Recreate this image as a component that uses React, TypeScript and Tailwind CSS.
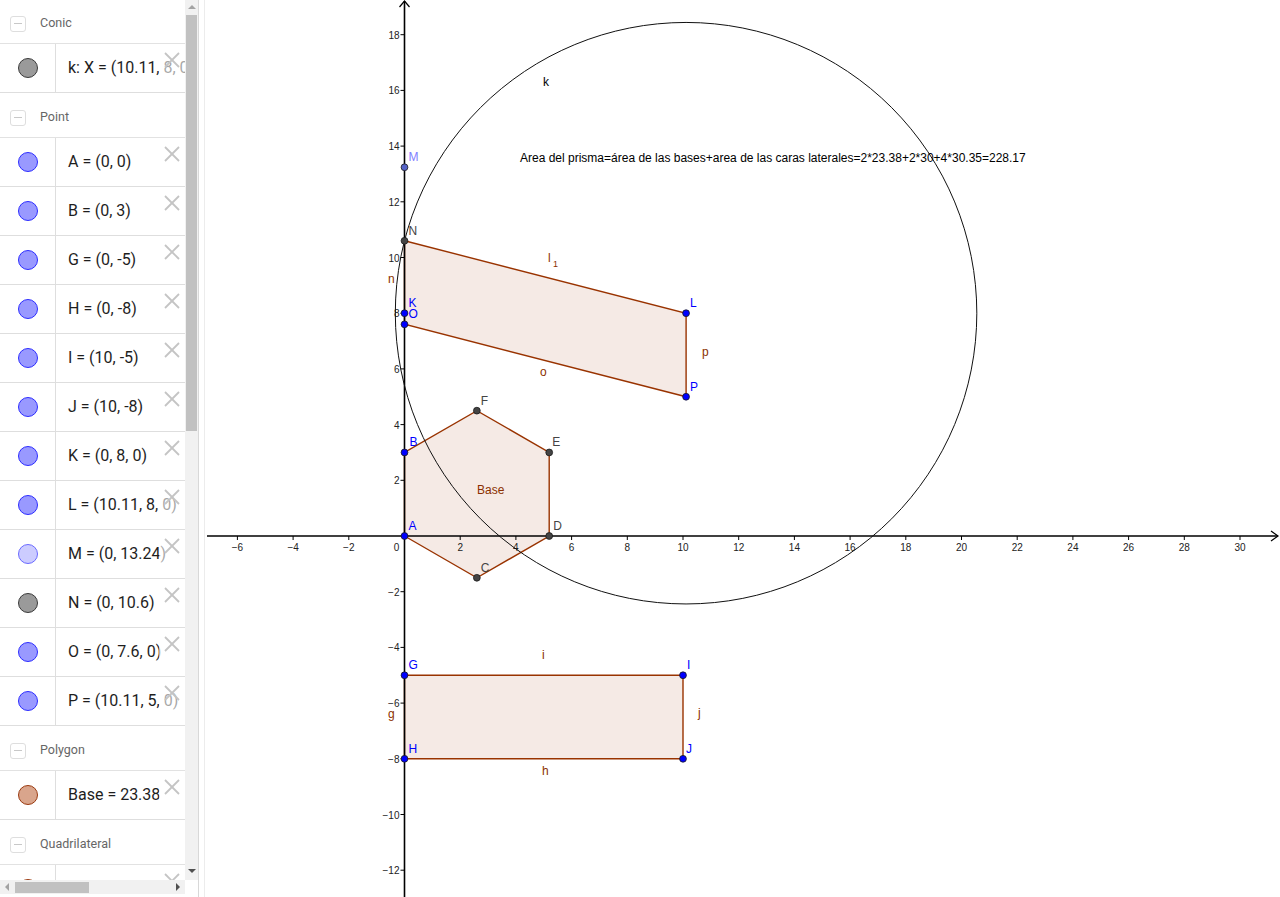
import React from "react";

const S = 27.85;
const OX = 199.5;
const OY = 536;
const px = (x: number) => OX + S * x;
const py = (y: number) => OY - S * y;

type Item =
  | { kind: "header"; label: string }
  | { kind: "item"; icon: "blue" | "gray" | "light" | "brown"; text: string };

const items: Item[] = [
  { kind: "header", label: "Conic" },
  { kind: "item", icon: "gray", text: "k: X = (10.11, 8, 0)" },
  { kind: "header", label: "Point" },
  { kind: "item", icon: "blue", text: "A = (0, 0)" },
  { kind: "item", icon: "blue", text: "B = (0, 3)" },
  { kind: "item", icon: "blue", text: "G = (0, -5)" },
  { kind: "item", icon: "blue", text: "H = (0, -8)" },
  { kind: "item", icon: "blue", text: "I = (10, -5)" },
  { kind: "item", icon: "blue", text: "J = (10, -8)" },
  { kind: "item", icon: "blue", text: "K = (0, 8, 0)" },
  { kind: "item", icon: "blue", text: "L = (10.11, 8, 0)" },
  { kind: "item", icon: "light", text: "M = (0, 13.24)" },
  { kind: "item", icon: "gray", text: "N = (0, 10.6)" },
  { kind: "item", icon: "blue", text: "O = (0, 7.6, 0)" },
  { kind: "item", icon: "blue", text: "P = (10.11, 5, 0)" },
  { kind: "header", label: "Polygon" },
  { kind: "item", icon: "brown", text: "Base = 23.38" },
  { kind: "header", label: "Quadrilateral" },
  { kind: "item", icon: "brown", text: "" },
];

function Marble({ icon }: { icon: string }) {
  const cls =
    icon === "blue"
      ? "bg-[#9999ff] border-[#2d2dff]"
      : icon === "gray"
      ? "bg-[#9a9a9a] border-[#3a3a3a]"
      : icon === "light"
      ? "bg-[#ccccff] border-[#6a6aff]"
      : "bg-[#d9a58c] border-[#9a3a10]";
  return <div className={`w-[20px] h-[20px] rounded-full border ${cls}`} />;
}

function DeleteX() {
  return (
    <div className="absolute right-0 top-[4px] w-[26px] h-[30px] bg-white/60 flex items-start justify-center pt-[3px]">
      <svg width="18" height="18" viewBox="0 0 18 18">
        <line x1="2" y1="2" x2="16" y2="16" stroke="#c4c4c4" strokeWidth="1.8" />
        <line x1="16" y1="2" x2="2" y2="16" stroke="#c4c4c4" strokeWidth="1.8" />
      </svg>
    </div>
  );
}

function AlgebraView() {
  return (
    <div className="w-[185px] h-[880px] overflow-hidden bg-white">
      <div className="mt-[-1px]">
        {items.map((it, i) =>
          it.kind === "header" ? (
            <div
              key={i}
              className="h-[45px] flex items-center pt-[5px] border-b border-[#e2e2e2]"
            >
              <div className="ml-[10px] w-[16px] h-[16px] rounded-[3px] border border-[#dedede] flex items-center justify-center">
                <div className="w-[8px] h-[1.5px] bg-[#c8c8c8]" />
              </div>
              <span className="ml-[14px] text-[12.5px] text-[#666666] font-['Roboto',sans-serif]">
                {it.label}
              </span>
            </div>
          ) : (
            <div
              key={i}
              className="relative h-[49px] flex border-b border-[#dedede]"
            >
              <div className="w-[56px] shrink-0 flex items-center justify-center border-r border-[#dedede] pl-[1px]">
                <Marble icon={it.icon} />
              </div>
              <div className="flex items-center pl-[12px] whitespace-nowrap text-[16px] text-[#1e1e1e] font-['Roboto',sans-serif]">
                {it.text}
              </div>
              <DeleteX />
            </div>
          )
        )}
      </div>
    </div>
  );
}

function VScroll() {
  return (
    <div className="w-[13px] h-[880px] bg-[#f1f1f1] flex flex-col items-center">
      <div className="h-[14px] flex items-center justify-center">
        <div className="w-0 h-0 border-l-[4px] border-r-[4px] border-b-[4px] border-l-transparent border-r-transparent border-b-[#a3a3a3]" />
      </div>
      <div className="w-[11px] h-[416px] bg-[#c1c1c1] mt-[1px]" />
      <div className="flex-1" />
      <div className="h-[18px] flex items-center justify-center">
        <div className="w-0 h-0 border-l-[4px] border-r-[4px] border-t-[4px] border-l-transparent border-r-transparent border-t-[#505050]" />
      </div>
    </div>
  );
}

function HScroll() {
  return (
    <div className="w-[185px] h-[14px] bg-[#f1f1f1] flex items-center">
      <div className="w-[14px] flex items-center justify-center">
        <div className="w-0 h-0 border-t-[4px] border-b-[4px] border-r-[4px] border-t-transparent border-b-transparent border-r-[#a3a3a3]" />
      </div>
      <div className="w-[74px] h-[11px] bg-[#c1c1c1] ml-[1px]" />
      <div className="flex-1" />
      <div className="w-[14px] flex items-center justify-center">
        <div className="w-0 h-0 border-t-[4px] border-b-[4px] border-l-[4px] border-t-transparent border-b-transparent border-l-[#505050]" />
      </div>
    </div>
  );
}

const BROWN = "#993300";
const FILL = "rgba(153,51,0,0.1)";

type Pt = { n: string; x: number; y: number; c: "blue" | "dark" | "m" };

const pts: Pt[] = [
  { n: "A", x: 0, y: 0, c: "blue" },
  { n: "B", x: 0, y: 3, c: "blue" },
  { n: "C", x: 2.598, y: -1.5, c: "dark" },
  { n: "D", x: 5.196, y: 0, c: "dark" },
  { n: "E", x: 5.196, y: 3, c: "dark" },
  { n: "F", x: 2.598, y: 4.5, c: "dark" },
  { n: "G", x: 0, y: -5, c: "blue" },
  { n: "H", x: 0, y: -8, c: "blue" },
  { n: "I", x: 10, y: -5, c: "blue" },
  { n: "J", x: 10, y: -8, c: "blue" },
  { n: "K", x: 0, y: 8, c: "blue" },
  { n: "L", x: 10.11, y: 8, c: "blue" },
  { n: "M", x: 0, y: 13.24, c: "m" },
  { n: "N", x: 0, y: 10.6, c: "dark" },
  { n: "O", x: 0, y: 7.6, c: "blue" },
  { n: "P", x: 10.11, y: 5, c: "blue" },
];

const labelOffset: Record<string, [number, number]> = {
  A: [4, -6],
  B: [5, -6],
  C: [4, -6],
  D: [4, -6],
  E: [3, -6],
  F: [4, -6],
  G: [4, -6],
  H: [4, -6],
  I: [4, -6],
  J: [3, -6],
  K: [4, -6],
  L: [4, -6],
  M: [4, -6],
  N: [4, -6],
  O: [4, -6],
  P: [4, -6],
};

function poly(list: [number, number][]) {
  return list.map(([x, y]) => `${px(x).toFixed(1)},${py(y).toFixed(1)}`).join(" ");
}

function GraphicsView() {
  const xTicks = [-6, -4, -2, 2, 4, 6, 8, 10, 12, 14, 16, 18, 20, 22, 24, 26, 28, 30];
  const yTicks = [18, 16, 14, 12, 10, 8, 6, 4, 2, -2, -4, -6, -8, -10, -12];
  const fmt = (v: number) => (v < 0 ? "\u2212" + Math.abs(v) : String(v));
  const hex: [number, number][] = [
    [0, 0],
    [2.598, -1.5],
    [5.196, 0],
    [5.196, 3],
    [2.598, 4.5],
    [0, 3],
  ];
  const quad: [number, number][] = [
    [0, 10.6],
    [10.11, 8],
    [10.11, 5],
    [0, 7.6],
  ];
  const rect: [number, number][] = [
    [0, -5],
    [10, -5],
    [10, -8],
    [0, -8],
  ];
  return (
    <div className="w-[1075px] h-[897px] bg-white">
      <svg
        width="1075"
        height="897"
        viewBox="0 0 1075 897"
        style={{ fontFamily: "'Liberation Sans', Arial, sans-serif" }}
      >
        {/* polygons */}
        <polygon points={poly(hex)} fill={FILL} stroke={BROWN} strokeWidth="1.4" />
        <polygon points={poly(quad)} fill={FILL} stroke={BROWN} strokeWidth="1.4" />
        <polygon points={poly(rect)} fill={FILL} stroke={BROWN} strokeWidth="1.4" />

        {/* axes */}
        <line x1="2" y1={OY} x2="1073" y2={OY} stroke="#000" strokeWidth="1.6" />
        <polyline
          points={`1066,${OY - 5} 1073,${OY} 1066,${OY + 5}`}
          fill="none"
          stroke="#000"
          strokeWidth="1.2"
        />
        <line x1={OX} y1="1" x2={OX} y2="897" stroke="#000" strokeWidth="1.6" />
        <polyline
          points={`${OX - 5},7 ${OX},1 ${OX + 5},7`}
          fill="none"
          stroke="#000"
          strokeWidth="1.2"
        />
        {xTicks.map((v) => (
          <g key={"x" + v}>
            <line x1={px(v)} y1={OY} x2={px(v)} y2={OY + 4} stroke="#000" strokeWidth="1" />
            <text x={px(v)} y={OY + 15} fontSize="10" textAnchor="middle" fill="#222">
              {fmt(v)}
            </text>
          </g>
        ))}
        <text x={OX - 8} y={OY + 15} fontSize="10" textAnchor="middle" fill="#222">
          0
        </text>
        {yTicks.map((v) => (
          <g key={"y" + v}>
            <line x1={OX - 4} y1={py(v)} x2={OX} y2={py(v)} stroke="#000" strokeWidth="1" />
            <text x={OX - 5} y={py(v) + 4} fontSize="10" textAnchor="end" fill="#222">
              {fmt(v)}
            </text>
          </g>
        ))}

        {/* circle k */}
        <circle
          cx={px(10.11)}
          cy={py(8)}
          r={10.44 * S}
          fill="none"
          stroke="#111"
          strokeWidth="1"
        />
        <text x={338} y={86} fontSize="12" fill="#000">
          k
        </text>

        {/* text */}
        <text x={315} y={162} fontSize="12" fill="#000">
          Area del prisma=área de las bases+area de las caras laterales=2*23.38+2*30+4*30.35=228.17
        </text>

        {/* segment labels */}
        <g fontSize="12" fill="#8b3000">
          <text x={343} y={262}>l</text>
          <text x={348} y={267} fontSize="9">1</text>
          <text x={335} y={376}>o</text>
          <text x={497} y={356}>p</text>
          <text x={183} y={283}>n</text>
          <text x={337} y={659}>i</text>
          <text x={337} y={775}>h</text>
          <text x={183} y={718}>g</text>
          <text x={493} y={717}>j</text>
          <text x={272} y={494}>Base</text>
        </g>

        {/* points */}
        {pts.map((p) => {
          const cx = px(p.x);
          const cy = py(p.y);
          const fill = p.c === "blue" ? "#0000ff" : p.c === "dark" ? "#444444" : "#5663c8";
          const lab = p.c === "blue" ? "#0000ff" : p.c === "dark" ? "#444444" : "#8080ff";
          const [dx, dy] = labelOffset[p.n];
          return (
            <g key={p.n}>
              <circle cx={cx} cy={cy} r="3.4" fill={fill} stroke="#1a1a1a" strokeWidth="0.8" />
              <text x={cx + dx} y={cy + dy} fontSize="12" fill={lab}>
                {p.n}
              </text>
            </g>
          );
        })}
      </svg>
    </div>
  );
}

export default function App() {
  return (
    <div className="w-[1280px] h-[897px] overflow-hidden bg-white flex">
      <div className="w-[198px] h-[897px] flex flex-col">
        <div className="flex">
          <AlgebraView />
          <VScroll />
        </div>
        <div className="flex">
          <HScroll />
        </div>
      </div>
      <div className="w-[7px] h-[897px] border-l border-[#d8d8d8] border-r border-r-[#ececec]" />
      <GraphicsView />
    </div>
  );
}
